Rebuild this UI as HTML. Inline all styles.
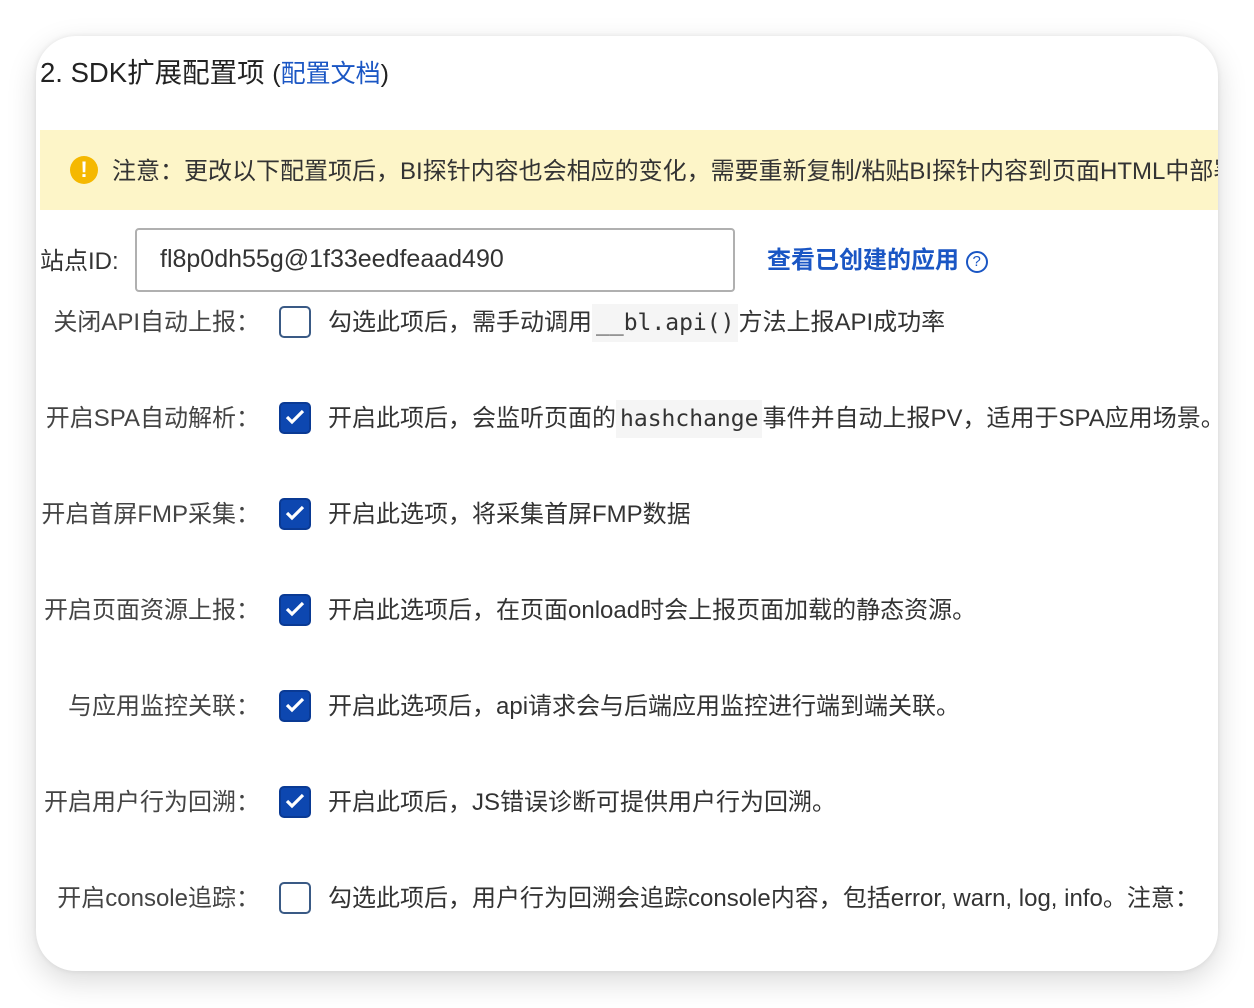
<!DOCTYPE html>
<html><head><meta charset="utf-8"><style>
body{margin:0;width:1254px;height:1008px;background:#fff;position:relative;overflow:hidden;font-family:"Liberation Sans","Noto Sans CJK SC",sans-serif;color:#333}
.card{position:absolute;left:36px;top:36px;width:1182px;height:935px;background:#fff;border-radius:40px;box-shadow:0 10px 30px rgba(0,0,0,.15),0 0 6px rgba(0,0,0,.08);overflow:hidden}
.abs{position:absolute;white-space:nowrap}
.title{left:4px;top:14px;font-size:27.5px;color:#222}
.title a{color:#1a56c4;text-decoration:none}
.title small{font-size:25px}
.banner{left:4px;top:94px;width:1200px;height:80px;background:#fdf5c8}
.banner .ic{position:absolute;left:30px;top:26px;width:28px;height:28px;border-radius:50%;background:#f5b800;color:#fff;font-weight:bold;font-size:22px;text-align:center;line-height:28px}
.banner .t{position:absolute;left:72px;top:21px;font-size:24px;color:#333}
.lbl{font-size:24px;color:#444;text-align:right;width:224px;left:0}
.cb{left:243px;width:28px;height:28px;border:2px solid #3a5a85;border-radius:5px;background:#fff}
.cb.on{background:#0d47b0;border-color:#0a3a94}
.cb.on svg{position:absolute;left:4px;top:5px}
.txt{left:292px;font-size:24px;color:#333}
code{font-family:"DejaVu Sans Mono","Liberation Mono",monospace;background:#f5f5f5;padding:6px 4px;font-size:23px;color:#333}
</style></head><body>
<div class="card">
<div class="abs title">2. SDK扩展配置项 <small>(<a>配置文档</a>)</small></div>
<div class="abs banner"><div class="ic">!</div><div class="t">注意：更改以下配置项后，BI探针内容也会相应的变化，需要重新复制/粘贴BI探针内容到页面HTML中部署</div></div>
<div class="abs" style="left:4px;top:205px;font-size:24px;color:#333">站点ID:</div>
<div class="abs" style="left:99px;top:192px;width:596px;height:60px;border:2px solid #b0b0b0;border-radius:4px"></div>
<div class="abs" style="left:124px;top:209px;font-size:25px;color:#333">fl8p0dh55g@1f33eedfeaad490</div>
<div class="abs" style="left:731px;top:204px;font-size:24px;color:#1a56c4;font-weight:bold">查看已创建的应用 <span style="display:inline-block;width:18px;height:18px;border:2px solid #1a56c4;border-radius:50%;font-size:15px;line-height:18px;text-align:center;vertical-align:2px;font-weight:normal">?</span></div>

<div class="abs lbl" style="top:266px">关闭API自动上报：</div>
<div class="abs cb" style="top:270px"></div>
<div class="abs txt" style="top:266px">勾选此项后，需手动调用<code>__bl.api()</code>方法上报API成功率</div>

<div class="abs lbl" style="top:362px">开启SPA自动解析：</div>
<div class="abs cb on" style="top:366px"><svg width="20" height="16" viewBox="0 0 20 16"><path d="M2 8l5 5 11-11" stroke="#fff" stroke-width="3.2" fill="none"/></svg></div>
<div class="abs txt" style="top:362px">开启此项后，会监听页面的<code>hashchange</code>事件并自动上报PV，适用于SPA应用场景。</div>

<div class="abs lbl" style="top:458px">开启首屏FMP采集：</div>
<div class="abs cb on" style="top:462px"><svg width="20" height="16" viewBox="0 0 20 16"><path d="M2 8l5 5 11-11" stroke="#fff" stroke-width="3.2" fill="none"/></svg></div>
<div class="abs txt" style="top:458px">开启此选项，将采集首屏FMP数据</div>

<div class="abs lbl" style="top:554px">开启页面资源上报：</div>
<div class="abs cb on" style="top:558px"><svg width="20" height="16" viewBox="0 0 20 16"><path d="M2 8l5 5 11-11" stroke="#fff" stroke-width="3.2" fill="none"/></svg></div>
<div class="abs txt" style="top:554px">开启此选项后，在页面onload时会上报页面加载的静态资源。</div>

<div class="abs lbl" style="top:650px">与应用监控关联：</div>
<div class="abs cb on" style="top:654px"><svg width="20" height="16" viewBox="0 0 20 16"><path d="M2 8l5 5 11-11" stroke="#fff" stroke-width="3.2" fill="none"/></svg></div>
<div class="abs txt" style="top:650px">开启此选项后，api请求会与后端应用监控进行端到端关联。</div>

<div class="abs lbl" style="top:746px">开启用户行为回溯：</div>
<div class="abs cb on" style="top:750px"><svg width="20" height="16" viewBox="0 0 20 16"><path d="M2 8l5 5 11-11" stroke="#fff" stroke-width="3.2" fill="none"/></svg></div>
<div class="abs txt" style="top:746px">开启此项后，JS错误诊断可提供用户行为回溯。</div>

<div class="abs lbl" style="top:842px">开启console追踪：</div>
<div class="abs cb" style="top:846px"></div>
<div class="abs txt" style="top:842px">勾选此项后，用户行为回溯会追踪console内容，包括error, warn, log, info。注意：</div>
</div>
</body></html>
